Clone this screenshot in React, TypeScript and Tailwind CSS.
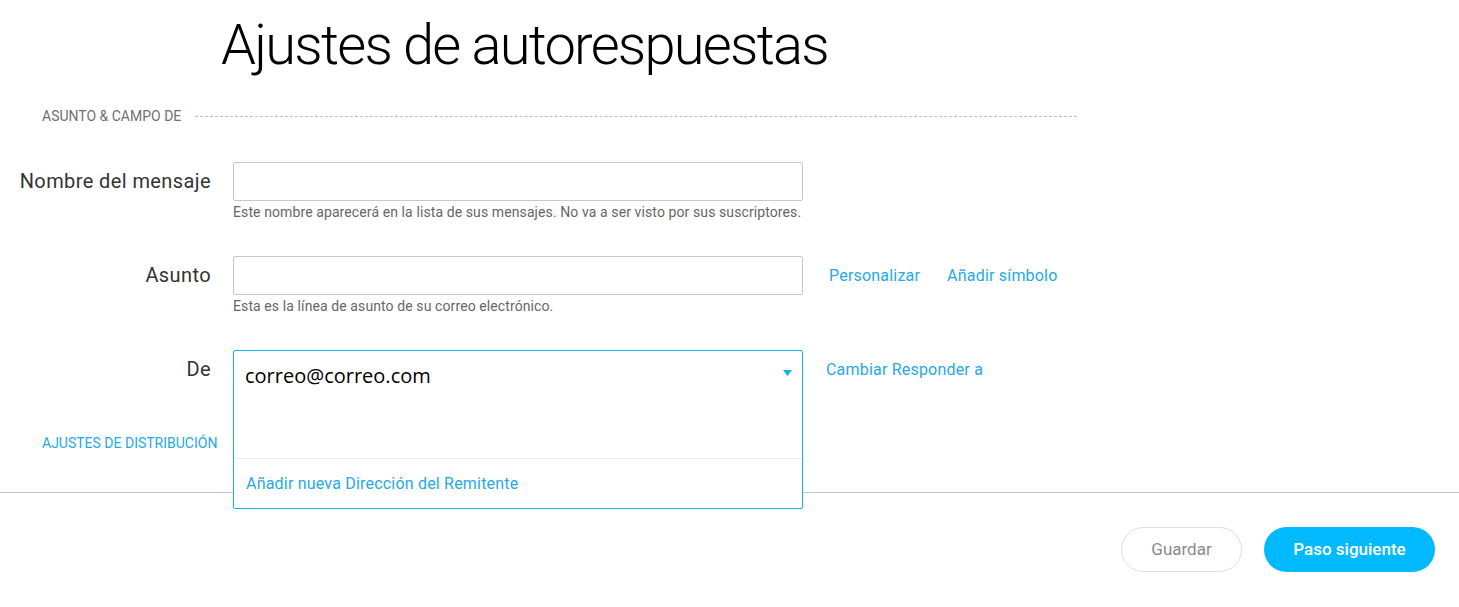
import React from "react";

const FieldRow: React.FC<{
  label: string;
  help?: string;
  children: React.ReactNode;
  side?: React.ReactNode;
}> = ({ label, help, children, side }) => {
  return (
    <div className="flex items-start">
      <label className="w-[211px] shrink-0 text-right text-[20px] leading-[39px] tracking-[0.4px] text-[#333]">
        {label}
      </label>
      <div className="ml-[22px] w-[570px] shrink-0">
        {children}
        {help && (
          <p className="mt-[3px] text-[14px] leading-[17px] tracking-[0.1px] text-[#666]">{help}</p>
        )}
      </div>
      {side && <div className="flex h-[39px] items-center">{side}</div>}
    </div>
  );
};

const TextInput: React.FC = () => (
  <input
    type="text"
    className="block h-[39px] w-full rounded-[2px] border border-[#c8c8c8] bg-white px-3 outline-none"
  />
);

// open "De" dropdown, drawn over the rows below it
const SenderSelect: React.FC = () => {
  return (
    <div className="relative h-[39px] w-full">
      <div className="absolute left-0 top-0 z-10 w-full rounded-[2px] border border-[#13b4ec] bg-white">
        <div className="flex h-[107px] items-start justify-between pl-[11px] pr-[10px] pt-[11px]">
          <span className="text-[20px] leading-[28px] text-black [font-family:'Open_Sans',sans-serif]">
            correo@correo.com
          </span>
          <svg width="9" height="6" viewBox="0 0 9 6" className="mt-[8px]">
            <path d="M0 0h9L4.5 6z" fill="#13b4ec" />
          </svg>
        </div>
        <div className="border-t border-[#e4ebf1]" />
        <a className="block h-[49px] pl-[12px] text-[16px] leading-[49px] tracking-[0.2px] text-[#25a9e8]">
          Añadir nueva Dirección del Remitente
        </a>
      </div>
    </div>
  );
};

export default function App() {
  return (
    <div className="flex h-[607px] w-full flex-col overflow-hidden bg-white [font-family:Roboto,sans-serif]">
      <h1 className="pl-[221px] pt-[11px] text-[56px] font-light leading-[68px] tracking-[-1.75px] text-black">
        Ajustes de autorespuestas
      </h1>

      <div className="mr-[382px] mt-[28px] flex items-center pl-[42px]">
        <span className="text-[14px] uppercase leading-[18px] text-[#707070]">Asunto &amp; campo De</span>
        <span className="ml-[14px] flex-1 border-t border-dashed border-[#bdbdbd]" />
      </div>

      <div className="mt-[37px] flex flex-col gap-[35px]">
        <FieldRow
          label="Nombre del mensaje"
          help="Este nombre aparecerá en la lista de sus mensajes. No va a ser visto por sus suscriptores."
        >
          <TextInput />
        </FieldRow>

        <FieldRow
          label="Asunto"
          help="Esta es la línea de asunto de su correo electrónico."
          side={
            <div className="ml-[26px] flex gap-[27px] text-[16px] tracking-[0.2px] text-[#25a9e8]">
              <a>Personalizar</a>
              <a>Añadir símbolo</a>
            </div>
          }
        >
          <TextInput />
        </FieldRow>

        <FieldRow
          label="De"
          side={<a className="ml-[23px] text-[16px] tracking-[0.2px] text-[#25a9e8]">Cambiar Responder a</a>}
        >
          <SenderSelect />
        </FieldRow>
      </div>

      <div className="mt-[45px] pl-[42px] text-[14px] uppercase leading-[18px] text-[#25a9e8]">
        Ajustes de distribución
      </div>

      <div className="mt-[40px] border-t border-[#c4c4c4]" />

      <div className="mt-[34px] flex justify-end gap-[22px] pr-[24px]">
        <button className="h-[45px] w-[121px] rounded-full border border-[#dedede] bg-white text-[17px] text-[#8a8a8a]">
          Guardar
        </button>
        <button className="h-[45px] w-[171px] rounded-full bg-[#00b9ff] text-[17px] font-medium text-white">
          Paso siguiente
        </button>
      </div>
    </div>
  );
}
